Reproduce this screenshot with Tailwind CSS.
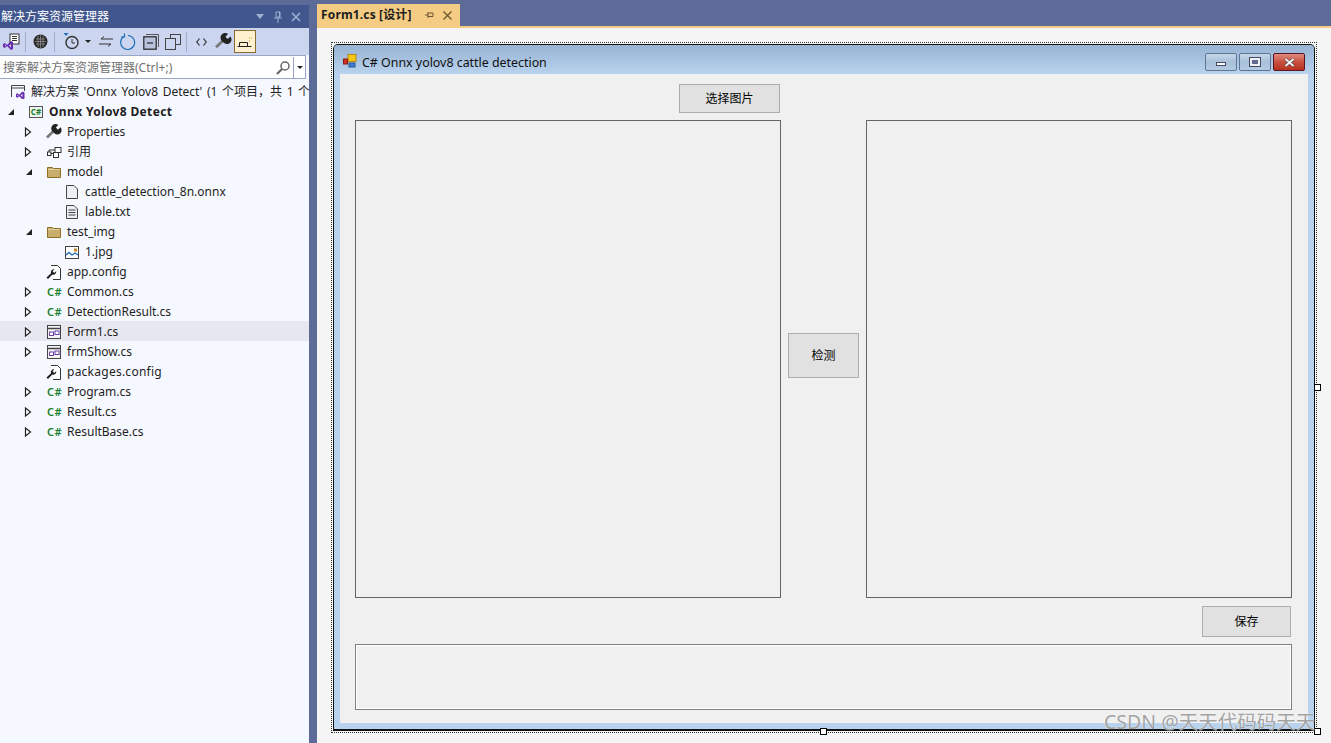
<!DOCTYPE html>
<html lang="en">
<head>
<meta charset="UTF-8" />
<title>Form1.cs</title>
<script src="https://cdn.jsdelivr.net/npm/@tailwindcss/browser@4"></script>
</head>
<body class="font-['Noto_Sans','Noto_Sans_CJK_SC',sans-serif] text-[12px] text-[#1e1e1e] overflow-hidden">

<!-- shared icons -->
<svg class="hidden">
  <symbol id="open" viewBox="0 0 8 10"><path d="M1.500 1v8L6.500 5z" fill="#fff" stroke="#222" stroke-width="1.200"/></symbol>
  <symbol id="down" viewBox="0 0 8 8"><path d="M7 1v6H1z" fill="#222"/></symbol>
  <symbol id="folder" viewBox="0 0 14 12"><path d="M.5 1.500h5l1 1h7v9H.5z" fill="#c9ad6c" stroke="#8f6f24"/><path d="M1 3.500h12" stroke="#e0cfa0"/></symbol>
  <symbol id="config" viewBox="0 0 15 15"><path d="M5 .5h6.500l3 3v11H7" fill="#fff" stroke="#333"/><path d="M.5 12.500 5 8.200a3 3 0 0 1 3.500-3.900L6.600 6.200l1.700 1.700 1.900-1.900a3 3 0 0 1-3.900 3.500l-4.300 4.500z" fill="#1e1e1e"/></symbol>
  <symbol id="form" viewBox="0 0 14 14"><rect x=".5" y=".5" width="13" height="13" fill="#f3f3f8" stroke="#444"/><path d="M.5 3.500h13" stroke="#444" stroke-width="1.500"/><rect x="2.500" y="7" width="4" height="3.500" fill="#fff" stroke="#6a3fa8"/><rect x="8" y="6" width="4" height="3.500" fill="#fff" stroke="#6a3fa8"/></symbol>
  <symbol id="wrench" viewBox="0 0 16 16"><path d="M1 13.500 7.800 6.800" stroke="#777" stroke-width="2.600"/><path d="M6.800 7.800A4 4 0 0 1 12.300 1l-2.500 2.500 2.200 2.200L14.500 3.300A4 4 0 0 1 8 9z" fill="#222"/></symbol>
</svg>

<div class="flex w-[1331px] h-[743px] bg-[#5d6b99]">

  <!-- solution explorer -->
  <aside class="w-[309px] mt-[5px] flex flex-col">
    <div class="h-[23px] bg-[#40568d] text-white flex items-center justify-between pl-px pr-[8px] shrink-0">
      <span class="leading-none">解决方案资源管理器</span>
      <div class="flex items-center gap-[8px] text-[#9fb0d4]">
        <svg class="w-[10px] h-[5px]" viewBox="0 0 10 5"><path d="M1 0h8L5 5z" fill="#9fb0d4"/></svg>
        <svg class="w-[10px] h-[12px]" viewBox="0 0 10 12"><path d="M3 1h4v5H3zM1 7h8M5 7v5M6.500 1v5" fill="none" stroke="#9fb0d4"/></svg>
        <svg class="w-[10px] h-[10px]" viewBox="0 0 10 10"><path d="M1 1l8 8M9 1l-8 8" stroke="#9fb0d4" stroke-width="1.600"/></svg>
      </div>
    </div>

    <!-- toolbar -->
    <div class="h-[27px] bg-[#ccd5f0] flex items-center shrink-0 pl-[3px]">
      <svg class="w-[17px] h-[17px] mr-[5px]" viewBox="0 0 17 17"><rect x="7" y="1" width="9" height="10" fill="#fff" stroke="#333"/><path d="M9 3.500h5M9 5.500h5M9 7.500h5" stroke="#333"/><path d="M0 11l2-1 2 2 4-4 2 1v7l-2 1-4-4-2 2-2-1zM2 11.500v2l1-1zM8 10.500 6 12.500l2 2z" fill="#6a2fb0" fill-rule="evenodd"/></svg>
      <span class="w-px h-[20px] bg-[#9fadd0] mr-[7px]"></span>
      <svg class="w-[15px] h-[15px] mr-[6px]" viewBox="0 0 15 15"><circle cx="7.500" cy="7.500" r="7" fill="#2a2a2a"/><path d="M3 5h9M2 7.500h11M3 10h9M5 2v11M7.500 1v13M10 2v11" stroke="#aaa" stroke-width=".6"/></svg>
      <span class="w-px h-[20px] bg-[#9fadd0] mr-[8px]"></span>
      <svg class="w-[17px] h-[17px] mr-[5px]" viewBox="0 0 17 17"><path d="M.5 0h5L3 3z" fill="#1e6fb8"/><circle cx="9" cy="9.500" r="6" fill="#ccd5f0" stroke="#333" stroke-width="1.400"/><path d="M9 6v4h3" fill="none" stroke="#333"/></svg>
      <svg class="w-[6px] h-[3px] mr-[8px]" viewBox="0 0 6 3"><path d="M0 0h6L3 3z" fill="#222"/></svg>
      <svg class="w-[14px] h-[11px] mr-[7px]" viewBox="0 0 14 11"><path d="M14 3H2l3-2.500M0 8h12l-3 2.500" fill="none" stroke="#333"/></svg>
      <svg class="w-[16px] h-[17px] mr-[7px]" viewBox="0 0 16 17"><path d="M4 3.500A7 7 0 1 0 8 2.500M4.500 .5v3.500H1" fill="none" stroke="#1e6fb8" stroke-width="1.200"/></svg>
      <svg class="w-[16px] h-[16px] mr-[6px]" viewBox="0 0 16 16"><path d="M3 .5h12.500V13" fill="none" stroke="#555"/><rect x=".8" y="2.800" width="12.400" height="12.400" fill="#b8c2dc" stroke="#222" stroke-width="1.200"/><path d="M4 9h6" stroke="#222" stroke-width="1.200"/></svg>
      <svg class="w-[16px] h-[16px] mr-[5px]" viewBox="0 0 16 16"><rect x="5.500" y=".5" width="10" height="10" fill="none" stroke="#444"/><rect x=".5" y="4.500" width="10" height="11" fill="#ccd5f0" stroke="#444"/></svg>
      <span class="w-px h-[20px] bg-[#9fadd0] mr-[9px]"></span>
      <svg class="w-[11px] h-[8px] mr-[8px]" viewBox="0 0 11 8"><path d="M3.500 .5 .8 4l2.700 3.500M7.500 .5 10.200 4 7.500 7.500" fill="none" stroke="#333" stroke-width="1.200"/></svg>
      <svg class="w-[17px] h-[17px] mr-[2px]" viewBox="0 0 16 16"><use href="#wrench"/></svg>
      <span class="w-[22px] h-[23px] bg-[#fff0d0] border border-[#8a6d2e] flex items-center justify-center">
        <svg class="w-[16px] h-[12px]" viewBox="0 0 16 12"><path d="M.5 10.500h14M2.500 10V6.500h8V10" fill="none" stroke="#222"/><path d="M12 5h1M14 2h1M12 2h1" stroke="#c99a2e"/></svg>
      </span>
    </div>

    <!-- search box -->
    <div class="h-[25px] bg-[#f6f8ff] shrink-0 pr-[3px]">
      <div class="h-[24px] pt-px flex items-center bg-white border border-[#9aa6c8] border-l-0">
        <span class="flex-1 text-[#717171] pl-[3px] whitespace-nowrap">搜索解决方案资源管理器(Ctrl+;)</span>
        <svg class="w-[14px] h-[14px] mr-[3px]" viewBox="0 0 14 14"><circle cx="9" cy="5" r="4" fill="none" stroke="#666" stroke-width="1.500"/><path d="M6 8l-5 5" stroke="#666" stroke-width="2.200"/></svg>
        <span class="w-[12px] h-full border-l border-[#9aa6c8] flex items-center justify-center">
          <svg class="w-[6px] h-[3px]" viewBox="0 0 6 3"><path d="M0 0h6L3 3z" fill="#222"/></svg>
        </span>
      </div>
    </div>

    <!-- tree -->
    <div class="flex-1 bg-[#f6f8ff] pt-[1px] overflow-hidden whitespace-nowrap">
      <div class="h-5 flex items-center pl-[11px] pt-[2px]">
        <svg class="w-[15px] h-[14px] mr-[5px] shrink-0" viewBox="0 0 15 14"><path d="M.5 12V.5h13V6M.5 3h13" fill="none" stroke="#444"/><path d="M5 9l1.500-.8 1.700 1.500L11.500 6.500l2 1v6l-2 1-3.300-3.200-1.700 1.500L5 12zM6.500 9.600v1.800l1-.9zM11.500 9l-1.800 1.500 1.800 1.500z" fill="#6a2fb0" fill-rule="evenodd"/></svg>
        <span class="[word-spacing:1.500px]">解决方案 'Onnx Yolov8 Detect' (1 个项目，共 1 个</span>
      </div>
      <div class="h-5 flex items-center pl-[7px] pt-[2px]">
        <svg class="w-[8px] h-[8px] mr-[14px] shrink-0" viewBox="0 0 8 8"><use href="#down"/></svg>
        <span class="w-[14px] h-[12px] mr-[6px] bg-[#eef5ee] border border-[#555] text-[#1a7f2e] text-[8px] font-bold leading-[10px] text-center">C#</span>
        <span class="font-bold tracking-[0.35px]">Onnx Yolov8 Detect</span>
      </div>
      <div class="h-5 flex items-center pl-[24px] pt-[2px]">
        <svg class="w-[8px] h-[10px] mr-[14px] shrink-0" viewBox="0 0 8 10"><use href="#open"/></svg>
        <svg class="w-[16px] h-[16px] mr-[5px] shrink-0" viewBox="0 0 16 16"><use href="#wrench"/></svg>
        <span>Properties</span>
      </div>
      <div class="h-5 flex items-center pl-[24px] pt-[2px]">
        <svg class="w-[8px] h-[10px] mr-[14px] shrink-0" viewBox="0 0 8 10"><use href="#open"/></svg>
        <svg class="w-[16px] h-[11px] mr-[5px] shrink-0" viewBox="0 0 15 11"><rect x="8.500" y=".5" width="6" height="5" fill="#fff" stroke="#333"/><rect x="1" y="5" width="3.500" height="3.500" fill="#fff" stroke="#333"/><rect x="7" y="5.500" width="5" height="5" fill="#fff" stroke="#333"/><path d="M4.500 6.500H7M2.500 5V3h6" fill="none" stroke="#333"/></svg>
        <span>引用</span>
      </div>
      <div class="h-5 flex items-center pl-[25px] pt-[2px]">
        <svg class="w-[8px] h-[8px] mr-[14px] shrink-0" viewBox="0 0 8 8"><use href="#down"/></svg>
        <svg class="w-[14px] h-[12px] mr-[6px] shrink-0" viewBox="0 0 14 12"><use href="#folder"/></svg>
        <span>model</span>
      </div>
      <div class="h-5 flex items-center pl-[66px] pt-[2px]">
        <svg class="w-[12px] h-[14px] mr-[7px] shrink-0" viewBox="0 0 12 14"><path d="M.5.500h7.500l3.500 3.500v9.500H.5z" fill="#eceef4" stroke="#444"/></svg>
        <span>cattle_detection_8n.onnx</span>
      </div>
      <div class="h-5 flex items-center pl-[66px] pt-[2px]">
        <svg class="w-[12px] h-[14px] mr-[7px] shrink-0" viewBox="0 0 12 14"><path d="M.5.500h7.500l3.500 3.500v9.500H.5z" fill="#eceef4" stroke="#444"/><path d="M2.500 5h7M2.500 7.500h7M2.500 10h7" stroke="#444"/></svg>
        <span>lable.txt</span>
      </div>
      <div class="h-5 flex items-center pl-[25px] pt-[2px]">
        <svg class="w-[8px] h-[8px] mr-[14px] shrink-0" viewBox="0 0 8 8"><use href="#down"/></svg>
        <svg class="w-[14px] h-[12px] mr-[6px] shrink-0" viewBox="0 0 14 12"><use href="#folder"/></svg>
        <span>test_img</span>
      </div>
      <div class="h-5 flex items-center pl-[65px] pt-[2px]">
        <svg class="w-[14px] h-[13px] mr-[6px] shrink-0" viewBox="0 0 14 13"><rect x=".5" y=".5" width="13" height="12" fill="#fff" stroke="#444"/><rect x="9" y="2.500" width="3" height="3" fill="#c08a30"/><path d="M1 9l3-2.500 3 2.500 3-2 3 2" fill="none" stroke="#1e6fb8" stroke-width="1.400"/></svg>
        <span>1.jpg</span>
      </div>
      <div class="h-5 flex items-center pl-[46px] pt-[2px]">
        <svg class="w-[15px] h-[15px] mr-[6px] shrink-0" viewBox="0 0 15 15"><use href="#config"/></svg>
        <span>app.config</span>
      </div>
      <div class="h-5 flex items-center pl-[24px] pt-[2px]">
        <svg class="w-[8px] h-[10px] mr-[15px] shrink-0" viewBox="0 0 8 10"><use href="#open"/></svg>
        <span class="w-[14px] mr-[6px] text-[#1a7f2e] text-[11px] font-semibold tracking-[0.5px]">C#</span>
        <span>Common.cs</span>
      </div>
      <div class="h-5 flex items-center pl-[24px] pt-[2px]">
        <svg class="w-[8px] h-[10px] mr-[15px] shrink-0" viewBox="0 0 8 10"><use href="#open"/></svg>
        <span class="w-[14px] mr-[6px] text-[#1a7f2e] text-[11px] font-semibold tracking-[0.5px]">C#</span>
        <span>DetectionResult.cs</span>
      </div>
      <div class="h-5 flex items-center pl-[24px] pt-[2px] bg-[#e6e7ef]">
        <svg class="w-[8px] h-[10px] mr-[15px] shrink-0" viewBox="0 0 8 10"><use href="#open"/></svg>
        <svg class="w-[14px] h-[14px] mr-[6px] shrink-0" viewBox="0 0 14 14"><use href="#form"/></svg>
        <span>Form1.cs</span>
      </div>
      <div class="h-5 flex items-center pl-[24px] pt-[2px]">
        <svg class="w-[8px] h-[10px] mr-[15px] shrink-0" viewBox="0 0 8 10"><use href="#open"/></svg>
        <svg class="w-[14px] h-[14px] mr-[6px] shrink-0" viewBox="0 0 14 14"><use href="#form"/></svg>
        <span>frmShow.cs</span>
      </div>
      <div class="h-5 flex items-center pl-[46px] pt-[2px]">
        <svg class="w-[15px] h-[15px] mr-[6px] shrink-0" viewBox="0 0 15 15"><use href="#config"/></svg>
        <span class="tracking-[0.25px]">packages.config</span>
      </div>
      <div class="h-5 flex items-center pl-[24px] pt-[2px]">
        <svg class="w-[8px] h-[10px] mr-[15px] shrink-0" viewBox="0 0 8 10"><use href="#open"/></svg>
        <span class="w-[14px] mr-[6px] text-[#1a7f2e] text-[11px] font-semibold tracking-[0.5px]">C#</span>
        <span>Program.cs</span>
      </div>
      <div class="h-5 flex items-center pl-[24px] pt-[2px]">
        <svg class="w-[8px] h-[10px] mr-[15px] shrink-0" viewBox="0 0 8 10"><use href="#open"/></svg>
        <span class="w-[14px] mr-[6px] text-[#1a7f2e] text-[11px] font-semibold tracking-[0.5px]">C#</span>
        <span>Result.cs</span>
      </div>
      <div class="h-5 flex items-center pl-[24px] pt-[2px]">
        <svg class="w-[8px] h-[10px] mr-[15px] shrink-0" viewBox="0 0 8 10"><use href="#open"/></svg>
        <span class="w-[14px] mr-[6px] text-[#1a7f2e] text-[11px] font-semibold tracking-[0.5px]">C#</span>
        <span>ResultBase.cs</span>
      </div>
    </div>
  </aside>

  <!-- designer -->
  <main class="ml-[8px] flex-1 flex flex-col min-w-0">
    <div class="h-[28px] pt-[4px] border-b-2 border-[#f5cc84] shrink-0">
      <div class="w-[143px] h-[22px] bg-[#f5cc84] flex items-center pl-[4px]">
        <span class="font-bold tracking-[0.15px]">Form1.cs [设计]</span>
        <svg class="w-[9px] h-[9px] ml-[13px]" viewBox="0 0 9 9"><path d="M3 1v6M3 2h5v3.500H3M0 4h3" fill="none" stroke="#6b5430"/></svg>
        <svg class="w-[9px] h-[9px] ml-[9px]" viewBox="0 0 9 9"><path d="M.5.500l8 8M8.500.500l-8 8" stroke="#6b5430" stroke-width="1.300"/></svg>
      </div>
    </div>

    <div class="flex-1 bg-[#f5f5f5] pl-[14px] pt-[14px] relative">
      <!-- selection frame with grab handles -->
      <div class="w-[986px] h-[691px] border border-dotted border-[#333] p-px relative">
        <div class="h-full flex flex-col border-l border-b-2 border-r border-t border-[#111] rounded-t-[5px] overflow-hidden bg-[#b9d3ee]">
          <div class="h-[29px] shrink-0 bg-linear-to-b from-[#97b3d3] to-[#b9d3ee] flex items-start pt-[8px] pl-[9px] pr-[9px]">
            <svg class="w-[14px] h-[14px] mr-[5px] mt-px" viewBox="0 0 14 14"><rect x="5" y=".5" width="8" height="7" fill="#f5c518" stroke="#b58a10"/><rect x=".5" y="5" width="4" height="5" fill="#d03020" stroke="#8a1a10"/><rect x="6" y="9" width="6" height="4" fill="#3d7bd0" stroke="#2a5a9a"/></svg>
            <span class="flex-1 text-[12.4px] leading-[18px] pt-px text-[#111]">C# Onnx yolov8 cattle detection</span>
            <div class="flex gap-[2px]">
              <span class="w-[32px] h-[18px] rounded-[2px] border border-[#5f7594] bg-linear-to-b from-[#c6d7ea] via-[#a8c0da] to-[#b4cbe2] flex items-center justify-center"><span class="w-[10px] h-[4px] mt-[3px] bg-white border border-[#444b60]"></span></span>
              <span class="w-[32px] h-[18px] rounded-[2px] border border-[#5f7594] bg-linear-to-b from-[#c6d7ea] via-[#a8c0da] to-[#b4cbe2] flex items-center justify-center"><span class="w-[10px] h-[8px] bg-[#5e6a8e] border-2 border-[#eef0f5] outline outline-[#444b60]"></span></span>
              <span class="w-[32px] h-[18px] rounded-[2px] border border-[#5a1525] bg-linear-to-b from-[#e08a80] via-[#c8503f] to-[#b83020] flex items-center justify-center">
                <svg class="w-[11px] h-[9px]" viewBox="0 0 11 9"><path d="M1.500 1l8 7M9.500 1l-8 7" stroke="#444" stroke-width="3"/><path d="M1.500 1l8 7M9.500 1l-8 7" stroke="#f2f2f2" stroke-width="2"/></svg>
              </span>
            </div>
          </div>

          <!-- form client area -->
          <div class="flex-1 mx-[6px] mb-[6px] bg-[#f0f0f0] pt-[10px] pl-[15px]">
            <div class="h-[29px] pl-[324px]">
              <button class="w-[101px] h-[29px] bg-[#e1e1e1] border border-[#adadad] text-black">选择图片</button>
            </div>
            <div class="flex mt-[7px] h-[478px]">
              <div class="w-[426px] border border-[#646464]"></div>
              <div class="w-[85px] pt-[213px] pl-[7px]">
                <button class="w-[71px] h-[45px] bg-[#e1e1e1] border border-[#adadad] text-black">检测</button>
              </div>
              <div class="w-[426px] border border-[#646464]"></div>
            </div>
            <div class="w-[936px] flex justify-end mt-[8px]">
              <button class="w-[89px] h-[31px] bg-[#e1e1e1] border border-[#adadad] text-black">保存</button>
            </div>
            <div class="w-[937px] h-[66px] mt-[7px] border border-[#808080] [box-shadow:inset_0_0_0_1px_#fff]"></div>
          </div>
        </div>

        <span class="absolute left-[982px] top-[341px] w-[7px] h-[7px] bg-white border border-black"></span>
        <span class="absolute left-[488px] top-[685px] w-[7px] h-[7px] bg-white border border-black"></span>
        <span class="absolute left-[982px] top-[685px] w-[7px] h-[7px] bg-white border border-black"></span>
      </div>

      <span class="absolute left-[787px] top-[680px] text-[19.5px] leading-[28px] text-[#8a8a8a]/80 whitespace-nowrap [text-shadow:0_0_1px_#fff]">CSDN @天天代码码天天</span>
    </div>
  </main>
</div>
</body>
</html>
